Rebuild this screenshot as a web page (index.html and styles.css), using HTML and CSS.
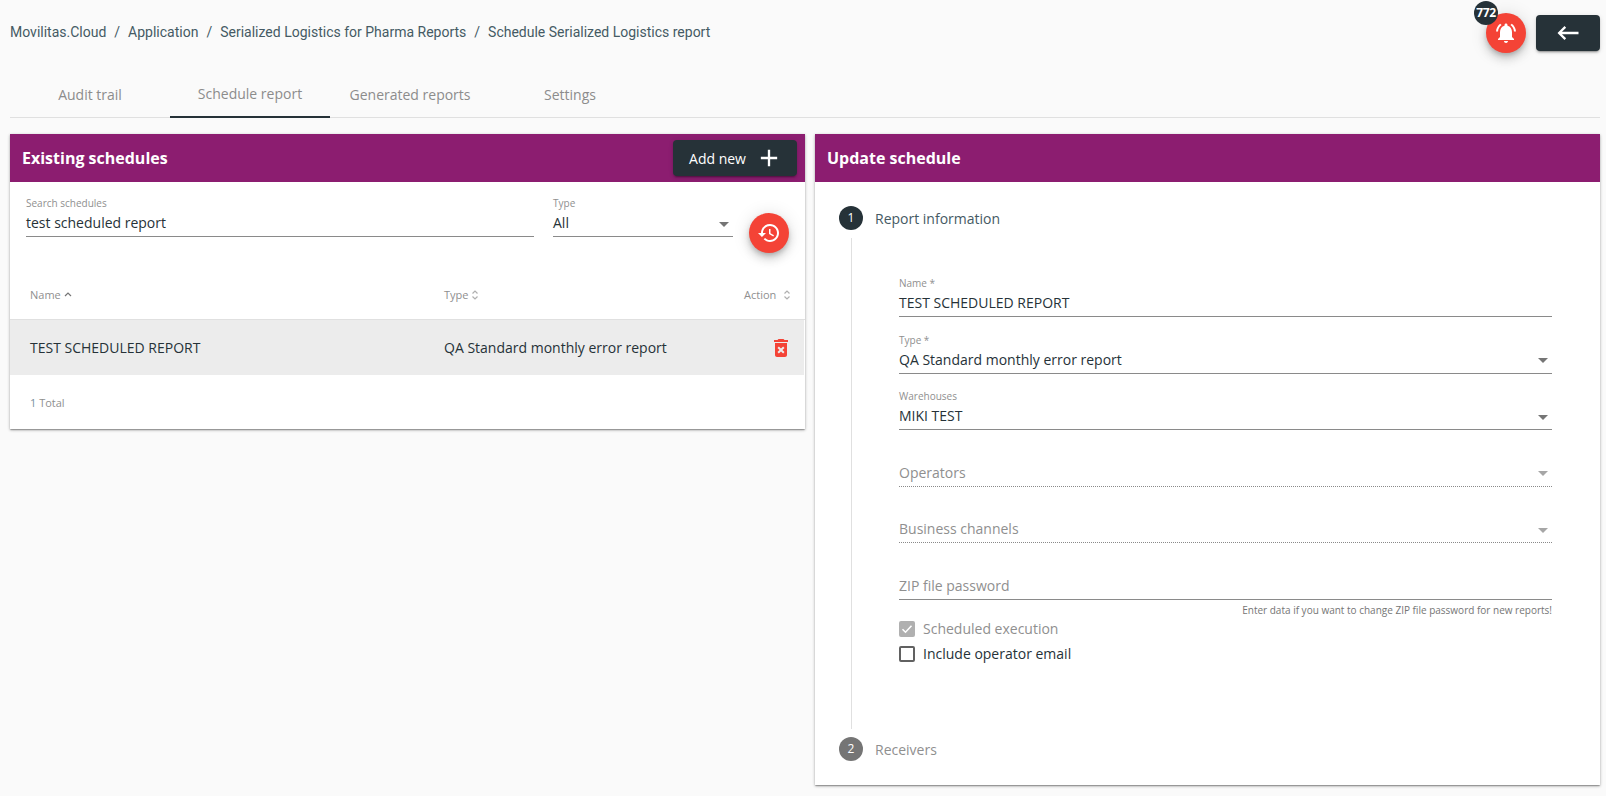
FILE: index.html
```html
<!DOCTYPE html>
<html lang="en">
<head>
<meta charset="utf-8">
<title>Schedule Serialized Logistics report</title>
<link rel="stylesheet" href="styles.css">
</head>
<body>
<div class="page">
  <header class="topbar">
    <nav class="crumbs">
      <span>Movilitas.Cloud</span><span class="sep">/</span><span>Application</span><span class="sep">/</span><span>Serialized Logistics for Pharma Reports</span><span class="sep">/</span><span>Schedule Serialized Logistics report</span>
    </nav>
    <div class="top-actions">
      <div class="fab fab-bell">
        <span class="badge">772</span>
        <svg class="icon-24" viewBox="0 0 24 24"><path d="M7.58 4.08L6.15 2.65C3.75 4.48 2.17 7.3 2.03 10.5h2c.15-2.65 1.51-4.97 3.55-6.42zm12.39 6.42h2c-.15-3.2-1.73-6.02-4.12-7.85l-1.42 1.43c2.02 1.45 3.39 3.77 3.54 6.42zM18 11c0-3.07-1.64-5.64-4.5-6.32V4c0-.83-.67-1.5-1.5-1.5s-1.5.67-1.5 1.5v.68C7.63 5.36 6 7.92 6 11v5l-2 2v1h16v-1l-2-2v-5zm-6 11c.14 0 .27-.01.4-.04.65-.14 1.18-.58 1.44-1.18.1-.24.15-.5.15-.78h-4c.01 1.1.9 2 2.01 2z"/></svg>
      </div>
      <button class="btn-dark btn-back"><svg class="icon-28" viewBox="0 0 24 24"><path d="M21 11H6.83l3.58-3.59L9 6l-6 6 6 6 1.41-1.41L6.83 13H21z"/></svg></button>
    </div>
  </header>

  <div class="tabs">
    <div class="tab">Audit trail</div>
    <div class="tab tab-active">Schedule report</div>
    <div class="tab">Generated reports</div>
    <div class="tab">Settings</div>
  </div>

  <main class="columns">
    <section class="panel panel-left">
      <div class="panel-head">
        <h2 class="panel-title">Existing schedules</h2>
        <button class="btn-dark btn-add">Add new<svg class="icon-28" viewBox="0 0 24 24"><path d="M19 13h-6v6h-2v-6H5v-2h6V5h2v6h6v2z"/></svg></button>
      </div>
      <div class="filters">
        <div class="field filter-search">
          <div class="field-label">Search schedules</div>
          <div class="field-value">test scheduled report</div>
        </div>
        <div class="field filter-type">
          <div class="field-label">Type</div>
          <div class="field-value">All<i class="caret"></i></div>
        </div>
        <div class="fab fab-history">
          <svg class="icon-24" viewBox="0 0 24 24"><path d="M13 3c-4.97 0-9 4.03-9 9H1l3.89 3.89.07.14L9 12H6c0-3.87 3.13-7 7-7s7 3.13 7 7-3.13 7-7 7c-1.93 0-3.68-.79-4.94-2.06l-1.42 1.42C8.27 19.99 10.51 21 13 21c4.97 0 9-4.03 9-9s-4.03-9-9-9zm-1 5v5l4.28 2.54.72-1.21-3.5-2.08V8H12z"/></svg>
        </div>
      </div>
      <div class="table-head">
        <div class="col-name">Name <svg class="sort" viewBox="0 0 8 12"><path d="M1 7l3-3 3 3" class="sort-on"/></svg></div>
        <div class="col-type">Type <svg class="sort" viewBox="0 0 8 12"><path d="M1.5 4.5L4 2l2.5 2.5M1.5 7.5L4 10l2.5-2.5" class="sort-off"/></svg></div>
        <div class="col-action">Action <svg class="sort" viewBox="0 0 8 12"><path d="M1.5 4.5L4 2l2.5 2.5M1.5 7.5L4 10l2.5-2.5" class="sort-off"/></svg></div>
      </div>
      <div class="table-row">
        <div class="col-name">TEST SCHEDULED REPORT</div>
        <div class="col-type">QA Standard monthly error report</div>
        <div class="col-del"><svg class="icon-24 icon-red" viewBox="0 0 24 24"><path d="M6 19c0 1.1.9 2 2 2h8c1.1 0 2-.9 2-2V7H6v12zm2.46-7.12l1.41-1.41L12 12.59l2.12-2.12 1.41 1.41L13.41 14l2.12 2.12-1.41 1.41L12 15.41l-2.12 2.12-1.41-1.41L10.59 14l-2.13-2.12zM15.5 4l-1-1h-5l-1 1H5v2h14V4z"/></svg></div>
      </div>
      <div class="table-foot"><span class="count">1</span> Total</div>
    </section>

    <section class="panel panel-right">
      <div class="panel-head">
        <h2 class="panel-title">Update schedule</h2>
      </div>
      <div class="stepper">
        <div class="step-head">
          <span class="step-num">1</span>
          <span class="step-label">Report information</span>
        </div>
        <div class="step-body">
          <div class="field form-field">
            <div class="field-label">Name *</div>
            <div class="field-value">TEST SCHEDULED REPORT</div>
          </div>
          <div class="field form-field">
            <div class="field-label">Type *</div>
            <div class="field-value">QA Standard monthly error report<i class="caret"></i></div>
          </div>
          <div class="field form-field">
            <div class="field-label">Warehouses</div>
            <div class="field-value">MIKI TEST<i class="caret"></i></div>
          </div>
          <div class="field form-field field-disabled">
            <div class="field-value">Operators<i class="caret"></i></div>
          </div>
          <div class="field form-field field-disabled">
            <div class="field-value">Business channels<i class="caret"></i></div>
          </div>
          <div class="field form-field field-empty">
            <div class="field-value">ZIP file password</div>
          </div>
          <div class="hint">Enter data if you want to change ZIP file password for new reports!</div>
          <div class="check check-disabled">
            <span class="box"><svg viewBox="0 0 16 16"><path d="M3.5 8.2l3 3 6-6.4"/></svg></span>Scheduled execution
          </div>
          <div class="check">
            <span class="box"></span>Include operator email
          </div>
        </div>
        <div class="step-head step-inactive">
          <span class="step-num">2</span>
          <span class="step-label">Receivers</span>
        </div>
      </div>
    </section>
  </main>
</div>
</body>
</html>
```

FILE: styles.css
```css
* { box-sizing: border-box; }
html, body { margin: 0; padding: 0; }
body {
  background: #fafafa;
  font-family: "Open Sans", sans-serif;
  font-size: 14px;
  color: #263238;
  overflow: hidden;
}
.page { width: 1606px; height: 796px; padding: 0 6px 0 10px; }

.topbar { height: 70px; display: flex; justify-content: space-between; align-items: flex-start; }
.crumbs { font-family: Roboto, sans-serif; font-size: 14px; color: #455a64; line-height: 20px; margin-top: 22px; white-space: nowrap; }
.sep { margin: 0 8px; }
.top-actions { display: flex; align-items: flex-start; margin-top: 13px; gap: 10px; }

.fab {
  width: 40px; height: 40px; border-radius: 50%;
  background: #f44336; color: #fff;
  display: flex; align-items: center; justify-content: center;
  box-shadow: 0 3px 5px -1px rgba(0,0,0,.2), 0 6px 10px 0 rgba(0,0,0,.14), 0 1px 18px 0 rgba(0,0,0,.12);
  flex: none;
}
.fab-bell { position: relative; margin-top: 0; }
.badge {
  position: absolute; left: -12px; top: -12px;
  width: 24px; height: 24px; border-radius: 50%;
  background: #263238; color: #fff;
  font-size: 12px; font-weight: 700; line-height: 24px; text-align: center;
  letter-spacing: -.3px;
}
.icon-24 { width: 24px; height: 24px; fill: currentColor; display: block; }
.icon-28 { width: 28px; height: 28px; fill: currentColor; display: block; }
.icon-red { color: #f44336; }

.btn-dark {
  background: #263238; color: #fff; border: 0; border-radius: 4px;
  font-family: "Open Sans", sans-serif; font-size: 14px;
  display: flex; align-items: center; justify-content: center;
  height: 36px; padding: 0;
  box-shadow: 0 3px 1px -2px rgba(0,0,0,.2), 0 2px 2px 0 rgba(0,0,0,.14), 0 1px 5px 0 rgba(0,0,0,.12);
}
.btn-back { width: 64px; margin-top: 2px; }
.btn-add { width: 124px; gap: 9px; padding-left: 2px; }

.tabs { display: flex; height: 48px; border-bottom: 1px solid #e0e0e0; }
.tab {
  width: 160px; height: 48px; display: flex; align-items: center; justify-content: center;
  color: #8c8c8c; font-size: 14px; padding-bottom: 0;
}
.tab-active { border-bottom: 2px solid #263238; padding-top: 1px; }

.columns { display: grid; grid-template-columns: 795px 785px; column-gap: 10px; margin-top: 16px; align-items: start; }
.panel {
  background: #fff;
  box-shadow: 0 1px 3px 0 rgba(0,0,0,.3), 0 1px 1px 0 rgba(0,0,0,.14), 0 2px 1px -1px rgba(0,0,0,.12);
}
.panel-head {
  height: 48px; background: #8c1d70; color: #fff;
  display: flex; align-items: center; justify-content: space-between;
  padding: 0 8px 0 12px;
}
.panel-title { margin: 0; font-size: 16px; font-weight: 700; }

.filters { display: flex; align-items: flex-start; padding: 15px 16px 0 16px; height: 66px; }
.field { height: 40px; border-bottom: 1px solid #8a8a8a; display: flex; flex-direction: column; justify-content: flex-end; }
.filter-search { width: 508px; }
.filter-type { width: 180px; margin-left: 19px; }
.fab-history { margin: 16px 0 0 16px; }
.field-label { font-size: 10px; line-height: 12px; color: #8f8f8f; margin-bottom: 4px; }
.field-value { font-size: 14px; line-height: 20px; padding-bottom: 3px; display: flex; align-items: center; justify-content: space-between; color: #263238; white-space: nowrap; }
.caret { width: 0; height: 0; border-left: 5px solid transparent; border-right: 5px solid transparent; border-top: 5px solid #757575; margin-right: 4px; margin-top: 2px; }

.table-head { height: 72px; display: flex; align-items: flex-end; padding: 0 0 16px 20px; border-bottom: 1px solid #e0e0e0; font-size: 11px; color: #8f8f8f; line-height: 16px; }
.table-row { height: 55px; display: flex; align-items: center; padding-left: 20px; background: #ececec; margin-right: 1px; }
.col-name { width: 414px; display: flex; align-items: center; gap: 3px; }
.col-type { width: 300px; display: flex; align-items: center; gap: 3px; }
.col-action { display: flex; align-items: center; gap: 7px; }
.col-del { margin-left: 25px; }
.sort { width: 8px; height: 12px; fill: none; stroke-width: 1.2; }
.sort-on { stroke: #757575; }
.sort-off { stroke: #b0b0b0; }
.table-foot { height: 54px; padding: 20px 0 0 20px; font-size: 11px; line-height: 16px; color: #8f8f8f; }
.count { color: #78909c; }

.stepper { padding: 24px 24px 24px 24px; }
.step-head { display: flex; align-items: center; height: 24px; gap: 12px; }
.step-num { width: 24px; height: 24px; border-radius: 50%; background: #263238; color: #fff; font-size: 12px; line-height: 24px; text-align: center; flex: none; }
.step-label { font-size: 14px; color: #455a64; }
.step-inactive .step-num { background: #757575; }
.step-inactive .step-label { color: #8f8f8f; }
.step-body { height: 491px; margin: 8px 0 8px 12px; border-left: 1px solid #e0e0e0; padding: 39px 24px 0 47px; }
.form-field { margin-bottom: 16.6px; }
.field-disabled { border-bottom: 1px dotted #8a8a8a; }
.field-disabled .field-value, .field-empty .field-value { color: #8f8f8f; }
.field-disabled .caret { border-top-color: #a6a6a6; }
.field-empty { margin-bottom: 0; }
.hint { font-size: 10px; line-height: 14px; text-align: right; color: #757575; margin-top: 3px; margin-bottom: 4px; }
.check { display: flex; align-items: center; height: 16px; gap: 8px; margin-bottom: 9px; color: #263238; }
.box { width: 16px; height: 16px; border: 2px solid #616161; border-radius: 2px; flex: none; }
.check-disabled { color: #8f8f8f; }
.check-disabled .box { border: 0; background: #b0b0b0; }
.box svg { display: block; width: 16px; height: 16px; fill: none; stroke: #fff; stroke-width: 1.6; }
```
